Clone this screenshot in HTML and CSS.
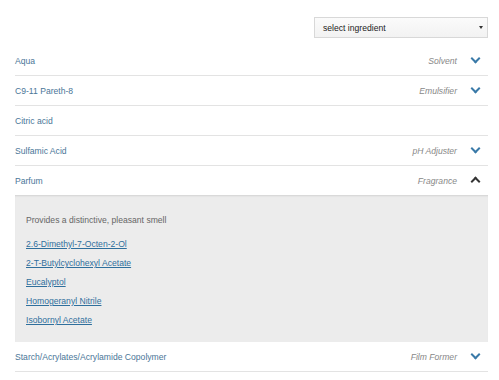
FILE: index.html
```html
<!DOCTYPE html>
<html lang="en">
<head>
    <meta charset="UTF-8">
    <title>Ingredients</title>
    <link rel="stylesheet" href="styles.css">
</head>
<body>

<div class="container">
    <div class="toolbar">
        <div class="select">
            <span>select ingredient</span>
            <span class="caret"></span>
        </div>
    </div>

    <div class="list">
        <div class="row">
            <span class="name">Aqua</span>
            <span class="role">Solvent</span>
            <span class="toggle"><span class="chev"></span></span>
        </div>
        <div class="row">
            <span class="name">C9-11 Pareth-8</span>
            <span class="role">Emulsifier</span>
            <span class="toggle"><span class="chev"></span></span>
        </div>
        <div class="row">
            <span class="name">Citric acid</span>
        </div>
        <div class="row">
            <span class="name">Sulfamic Acid</span>
            <span class="role">pH Adjuster</span>
            <span class="toggle"><span class="chev"></span></span>
        </div>
        <div class="row open">
            <span class="name">Parfum</span>
            <span class="role">Fragrance</span>
            <span class="toggle"><span class="chev up"></span></span>
        </div>
        <div class="panel">
            <p class="desc">Provides a distinctive, pleasant smell</p>
            <a href="#" class="link">2.6-Dimethyl-7-Octen-2-Ol</a>
            <a href="#" class="link">2-T-Butylcyclohexyl Acetate</a>
            <a href="#" class="link">Eucalyptol</a>
            <a href="#" class="link">Homogeranyl Nitrile</a>
            <a href="#" class="link">Isobornyl Acetate</a>
        </div>
        <div class="row">
            <span class="name">Starch/Acrylates/Acrylamide Copolymer</span>
            <span class="role">Film Former</span>
            <span class="toggle"><span class="chev"></span></span>
        </div>
    </div>
</div>

</body>
</html>
```

FILE: styles.css
```css
body {
    margin: 0;
    background: #fff;
    font-family: "Liberation Sans", Arial, sans-serif;
    font-size: 8.6px;
}
.container {
    padding: 17px 11px 0 15px;
}
.toolbar {
    display: flex;
    justify-content: flex-end;
    margin-bottom: 8px;
}
.select {
    width: 174px;
    height: 21px;
    box-sizing: border-box;
    display: flex;
    align-items: center;
    justify-content: space-between;
    padding: 0 4px 0 8px;
    border: 1px solid #d8d8d8;
    background: linear-gradient(#fbfbfb, #f2f2f2);
    color: #222;
}
.caret {
    width: 0;
    height: 0;
    border-left: 2px solid transparent;
    border-right: 2px solid transparent;
    border-top: 3px solid #333;
}
.row {
    height: 30px;
    box-sizing: border-box;
    display: flex;
    align-items: center;
    border-bottom: 1px solid #e3e3e3;
}
.row.open {
    border-bottom: none;
    height: 29px;
}
.name {
    flex: 1;
    color: #4a7698;
}
.role {
    color: #888;
    font-style: italic;
    margin-right: 5px;
}
.toggle {
    width: 26px;
    display: flex;
    justify-content: center;
}
.chev {
    width: 5px;
    height: 5px;
    border-right: 2px solid #3a7aa8;
    border-bottom: 2px solid #3a7aa8;
    transform: translateY(-2px) rotate(45deg);
}
.chev.up {
    border-color: #333;
    transform: translateY(1px) rotate(225deg);
}
.panel {
    background: #ececec;
    padding: 16px 11px 12px;
    box-shadow: inset 0 2px 2px -1px #d2d2d2;
}
.desc {
    margin: 0 0 5px;
    line-height: 19px;
    color: #666;
}
.link {
    display: block;
    line-height: 19px;
    color: #2f6f9c;
    text-decoration: underline;
    width: max-content;
}
```
